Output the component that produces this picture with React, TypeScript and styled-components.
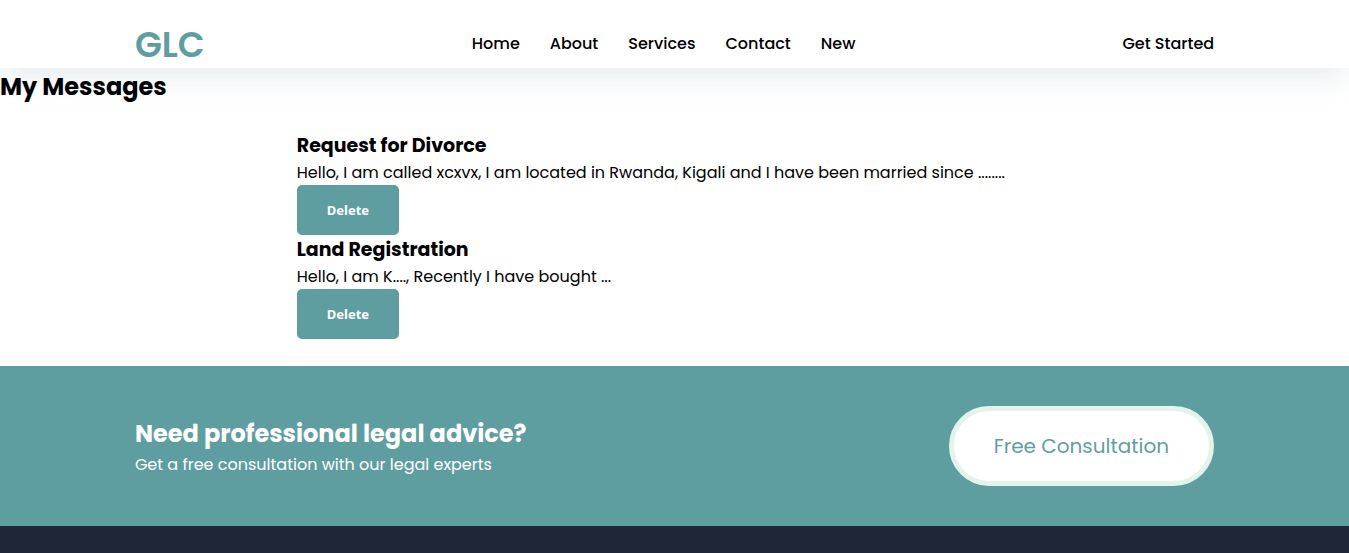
import React, { useState } from "react";
import styled, { createGlobalStyle } from "styled-components";

const teal = "#5f9ea0";

const GlobalStyle = createGlobalStyle`
  *, *::before, *::after { box-sizing: border-box; }
  body {
    margin: 0;
    background: #fff;
    color: #000;
    font-family: Poppins, Inter, sans-serif;
    font-size: 16px;
    line-height: 24px;
  }
  h1, h2, h3, p, ul { margin: 0; padding: 0; }
  ul { list-style: none; }
`;

const Page = styled.div`
  display: flex;
  flex-direction: column;
  min-height: 100vh;
`;

const Header = styled.header`
  display: flex;
  align-items: center;
  justify-content: space-between;
  padding: 20px 10% 0;
  background: #fff;
  box-shadow:
    0 13px 27px -5px rgba(50, 50, 93, 0.08),
    0 16px 32px rgba(120, 190, 200, 0.05);
`;

const Logo = styled.a`
  padding-top: 2px;
  color: ${teal};
  font-size: 35px;
  font-weight: 600;
  line-height: 46px;
  text-decoration: none;
`;

const NavList = styled.ul`
  display: flex;
  gap: 30px;
`;

const NavLink = styled.a`
  color: #000;
  font-weight: 500;
  text-decoration: none;
`;

const Main = styled.main`
  padding-bottom: 27px;
`;

const PageTitle = styled.h1`
  font-size: 24px;
  line-height: 38px;
`;

const MessageList = styled.ul`
  padding: 25px 22% 0;
`;

const MessageTitle = styled.h2`
  font-size: 19px;
  line-height: 30px;
`;

const DeleteButton = styled.button`
  display: block;
  height: 50px;
  padding: 0 30px;
  border: 0;
  border-radius: 5px;
  background: ${teal};
  color: #fff;
  font-family: "Noto Sans", sans-serif;
  font-size: 13px;
  font-weight: 700;
  cursor: pointer;
`;

const Banner = styled.section`
  display: flex;
  align-items: center;
  justify-content: space-between;
  padding: 40px 10%;
  background: ${teal};
  color: #fff;
`;

const BannerTitle = styled.h2`
  font-size: 24px;
  line-height: 38px;
`;

const ConsultLink = styled.a`
  padding: 20px 40px;
  border: 5px solid #e3f4ea;
  border-radius: 40px;
  background: #fff;
  color: ${teal};
  font-size: 20px;
  line-height: 30px;
  text-decoration: none;
`;

const Footer = styled.footer`
  flex: 1;
  background: #1d2737;
`;

const links = ["Home", "About", "Services", "Contact", "New"];

const initialMessages = [
  {
    id: 1,
    title: "Request for Divorce",
    text: "Hello, I am called xcxvx, I am located in Rwanda, Kigali and I have been married since ........",
  },
  {
    id: 2,
    title: "Land Registration",
    text: "Hello, I am K...., Recently I have bought ...",
  },
];

export default function App() {
  const [messages, setMessages] = useState(initialMessages);
  const remove = (id: number) =>
    setMessages((list) => list.filter((m) => m.id !== id));

  return (
    <Page>
      <GlobalStyle />
      <Header>
        <Logo href="#">GLC</Logo>
        <nav>
          <NavList>
            {links.map((label) => (
              <li key={label}>
                <NavLink href={`#${label.toLowerCase()}`}>{label}</NavLink>
              </li>
            ))}
          </NavList>
        </nav>
        <NavLink href="#start">Get Started</NavLink>
      </Header>
      <Main>
        <PageTitle>My Messages</PageTitle>
        <MessageList>
          {messages.map((m) => (
            <li key={m.id}>
              <MessageTitle>{m.title}</MessageTitle>
              <p>{m.text}</p>
              <DeleteButton type="button" onClick={() => remove(m.id)}>
                Delete
              </DeleteButton>
            </li>
          ))}
        </MessageList>
      </Main>
      <Banner>
        <div>
          <BannerTitle>Need professional legal advice?</BannerTitle>
          <p>Get a free consultation with our legal experts</p>
        </div>
        <ConsultLink href="#consultation">Free Consultation</ConsultLink>
      </Banner>
      <Footer />
    </Page>
  );
}
